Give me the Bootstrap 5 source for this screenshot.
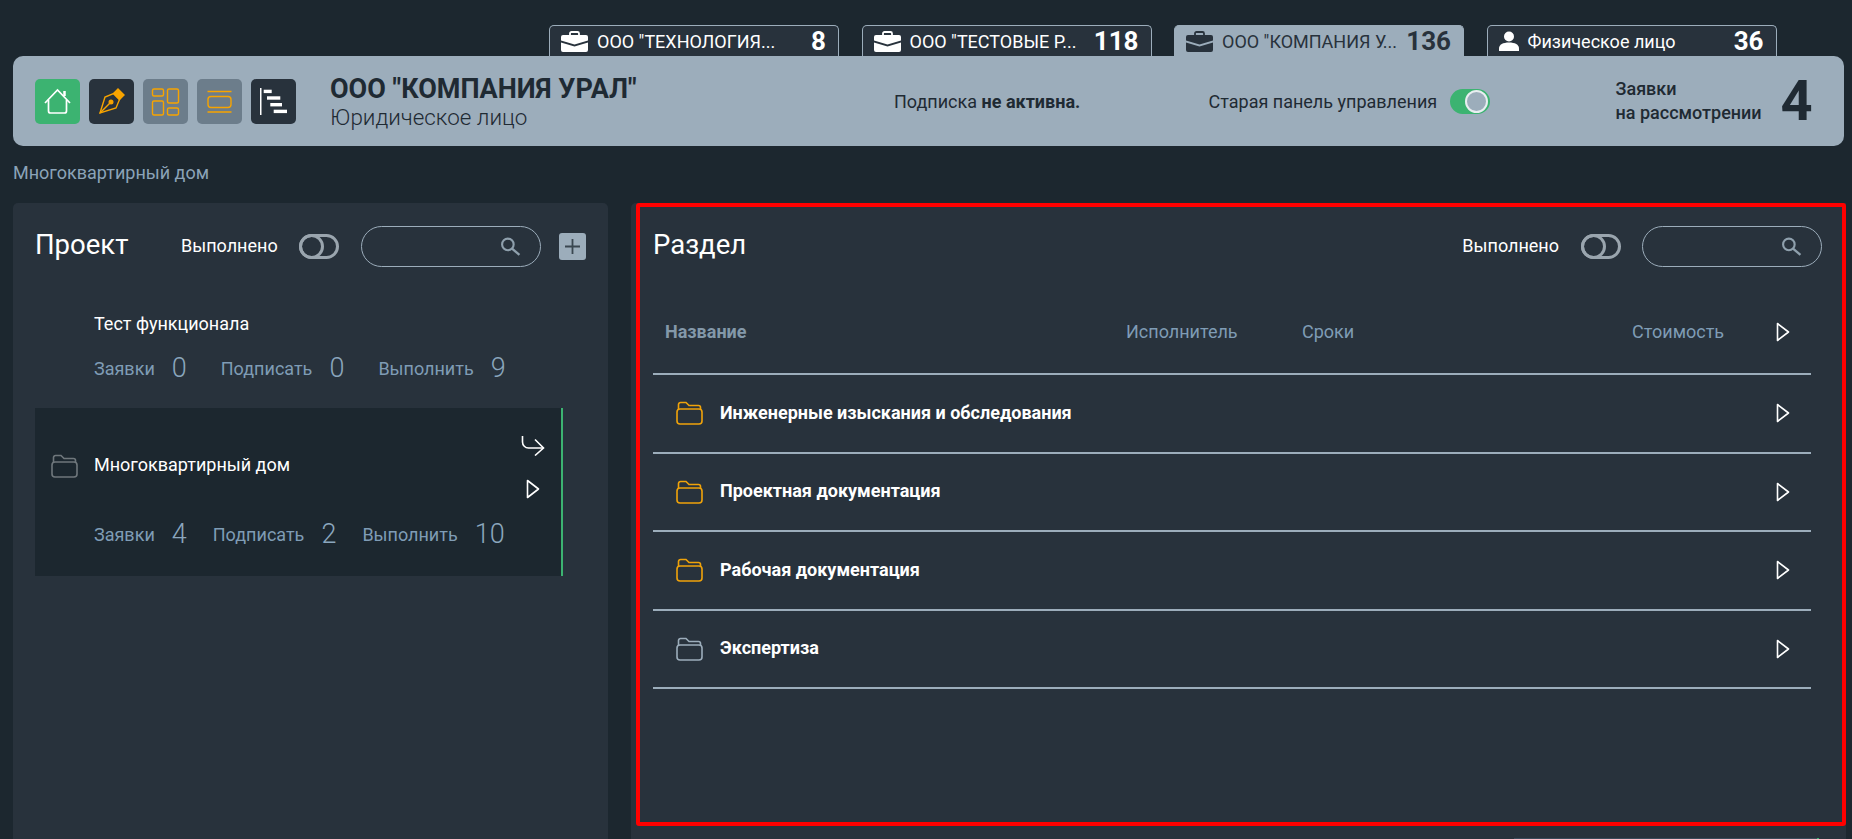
<!DOCTYPE html>
<html lang="ru">
<head>
<meta charset="utf-8">
<title>Панель управления</title>
<link href="https://cdn.jsdelivr.net/npm/bootstrap@5.3.0/dist/css/bootstrap.min.css" rel="stylesheet">
<style>
html,body{height:839px;overflow:hidden}
body{background:#1c272f;color:#fff;font-family:Roboto,"Liberation Sans",sans-serif;font-size:16px}
.tab-strip{height:56px;padding:25px 0 0 549px;gap:22.5px}
.co-tab{width:290px;height:31px;background:#28323c;border:1px solid #9cadbb;border-bottom:0;border-radius:5px 5px 0 0;padding:0 12px 0 11px;color:#fff}
.co-tab.is-on{background:#9cadbb;color:#28323c}
.co-tab svg{flex:none}
.co-name{flex:1 1 0;min-width:0;margin-left:9px;font-size:18px;white-space:nowrap}
.co-num{font-size:26px;font-weight:700;line-height:31px;margin-left:8px}
.top-bar{height:90px;margin:0 8px 0 13px;padding-left:22px;background:#9cadbb;border-radius:10px;color:#1f2a33}
.tool-row{gap:9px}
.tool-box{width:45px;height:45px;border-radius:5px;flex:none}
.tool-green{background:#3cb371}
.tool-dark{background:#28323c}
.tool-grey{background:#6c7d8b}
.org-block{width:564px;margin-left:34px;padding-top:2px}
.org-name{font-size:27px;font-weight:700;line-height:30px}
.org-kind{font-size:22.4px;font-weight:300;line-height:26px}
.sub-block{width:314.5px;font-size:18px}
.old-block{width:407px;font-size:18px}
.old-block .tgl{margin-left:13px}
.req-text{font-size:18px;font-weight:500;line-height:24px;width:165px}
.req-num{font-size:56px;font-weight:700;line-height:56px}
.crumb{height:57px;padding:14px 0 0 13px;color:#8ba3b8;font-size:18px;line-height:25px}
.work-area{height:636px;gap:23px;padding-left:13px}
.side-panel{width:595px;flex:none;background:#28323c;border-radius:5px 5px 0 0}
.sec-panel{width:1215px;flex:none;background:#28323c;border-radius:5px 0 0 0;padding-left:5px}
.sec-frame{width:1210px;height:623px;border:4px solid #f00;border-radius:3px;padding:19px 20px 0 13px}
.edge-sliver{height:1px;width:305px;margin:12px 27px 0 auto;background:#3b4a5a;border-right:2px solid #3cb371}
.head-line{height:41px}
.side-head{padding:23px 0 0 22px}
.pane-title{font-size:27.5px;line-height:32px;margin-bottom:4px}
.side-t{width:146px}
.done-label{font-size:18px;margin-bottom:2px}
.tgl{width:40px;height:25px;border:3px solid #9aa5ae;border-radius:13px;position:relative;flex:none}
.tgl::before{content:"";position:absolute;left:-3px;top:-3px;width:25px;height:25px;border:3px solid #9aa5ae;border-radius:50%}
.tgl.is-on{background:#3cb371;border-color:#3cb371}
.tgl.is-on::before{left:auto;background:#9cadbb;border-color:#e9eef1;border-width:2px;width:23px;height:23px;top:-2px;right:-1px}
.side-panel .tgl-gap{margin:0 22px 0 21px}
.sec-frame .tgl-gap{margin:0 21px 0 22px}
.find-box{width:180px;height:41px;border:1px solid #9cadbb;border-radius:21px;padding-right:19px;flex:none}
.lens-ico{color:#8fa0ad}
.plus-btn{width:27px;height:27px;background:#9cadbb;border-radius:3px;flex:none;margin-left:18px}
.tree-list{margin:0 45px 0 22px}
.tree-plain{padding:45px 0 0 59px}
.tree-active{margin-top:24px;height:168px;background:#1c272f;border-right:2px solid #3cb371;padding:28px 16px 0 16px}
.tree-title{font-size:18px;line-height:24px}
.tree-active .tree-title{margin-bottom:6px}
.tree-fold{color:#6f777c;flex:none;margin-bottom:4px}
.stat-line{color:#7f9cb5;font-size:18px;height:32px;margin-top:16px}
.tree-active .stat-line{margin:19px 0 0 43px}
.stat-line b{font-weight:300;font-size:27px;line-height:32px;margin-left:17px;color:#8ba6bd}
.stat-wide>span+span{margin-left:34px}
.stat-tight>span+span{margin-left:26px}
.stat-line>span{display:flex;align-items:center}
.act-col{width:24px;height:63px;flex:none}
.grid-line{display:grid;grid-template-columns:473px 176px 330px 144px 35px;align-items:center;border-bottom:2px solid #9cadbb;margin-right:11px;height:78.5px}
.grid-head{margin-top:27px;height:81px;color:#7f9cb5;font-size:18px;padding-bottom:4px}
.grid-head strong{font-weight:700;padding-left:12px;font-size:18px;color:#8398a9}
.row-name{grid-column:1 / span 4;padding-left:23px;padding-bottom:2px;font-weight:700;font-size:18px}
.row-name svg{margin:2px 17px 0 0;flex:none}
.fold-amber{color:#f0a30a}
.fold-grey{color:#9cadbb}
.box-content{box-sizing:content-box}
</style>
</head>
<body>
<svg width="0" height="0" class="position-absolute">
<defs>
<symbol id="case" viewBox="0 0 27 21"><path d="M9 5V2.500C9 1.700 9.700 1 10.500 1h6c.8 0 1.500.7 1.500 1.500V5" fill="none" stroke="currentColor" stroke-width="1.800"/><path d="M2 4h23a2 2 0 0 1 2 2v3.500l-13.500 4L0 9.500V6a2 2 0 0 1 2-2z" fill="currentColor"/><path d="M0 11.500l13.500 4 13.500-4V19a2 2 0 0 1-2 2H2a2 2 0 0 1-2-2z" fill="currentColor"/></symbol>
<symbol id="tri" viewBox="0 0 14 20"><path d="M1.500 1.500L12.500 10 1.500 18.500z" fill="none" stroke="#fff" stroke-width="1.600" stroke-linejoin="round"/></symbol>
<symbol id="fold" viewBox="0 0 27 24"><path d="M2.500 8V3.500a2 2 0 0 1 2-2H10l3 3h9.500a2 2 0 0 1 2 2V8" fill="none" stroke="currentColor" stroke-width="1.600"/><rect x="1" y="8" width="25" height="15" rx="3" fill="none" stroke="currentColor" stroke-width="1.600"/></symbol>
<symbol id="lens" viewBox="0 0 20 18"><circle cx="7.500" cy="7" r="5.500" fill="none" stroke="currentColor" stroke-width="2"/><path d="M11.500 11l7 6" stroke="currentColor" stroke-width="2.200" fill="none"/></symbol>
</defs>
</svg>

<div class="tab-strip d-flex">
  <div class="co-tab d-flex align-items-center"><svg width="27" height="21"><use href="#case"/></svg><span class="co-name">ООО "ТЕХНОЛОГИЯ...</span><span class="co-num">8</span></div>
  <div class="co-tab d-flex align-items-center"><svg width="27" height="21"><use href="#case"/></svg><span class="co-name">ООО "ТЕСТОВЫЕ Р...</span><span class="co-num">118</span></div>
  <div class="co-tab is-on d-flex align-items-center"><svg width="27" height="21"><use href="#case"/></svg><span class="co-name">ООО "КОМПАНИЯ У...</span><span class="co-num">136</span></div>
  <div class="co-tab d-flex align-items-center"><svg width="20" height="20" viewBox="0 0 20 20"><circle cx="10" cy="5.500" r="5" fill="currentColor"/><path d="M0 20v-2.500C0 13.500 4 11.500 10 11.500s10 2 10 6V20z" fill="currentColor"/></svg><span class="co-name">Физическое лицо</span><span class="co-num">36</span></div>
</div>

<header class="top-bar d-flex align-items-center">
  <div class="tool-row d-flex">
    <div class="tool-box tool-green"><svg width="45" height="45" viewBox="0 0 45 45" fill="none" stroke="#fff" stroke-width="1.700"><path d="M10 24L22.500 11 35 24"/><path d="M29.500 17v-5" stroke-width="2.500"/><path d="M13.500 21v11a2 2 0 0 0 2 2h14a2 2 0 0 0 2-2V21"/></svg></div>
    <div class="tool-box tool-dark"><svg width="45" height="45" viewBox="0 0 45 45" fill="none" stroke="#f7a400" stroke-width="1.400"><path d="M29 10l6 6-4.500 4.500-6-6z" fill="#f7a400"/><path d="M11 34l5-16 8.500-3.500 6 6L27 29z"/><path d="M11 34l9.500-9.500"/><circle cx="22" cy="23" r="1.800" fill="#f7a400"/></svg></div>
    <div class="tool-box tool-grey"><svg width="45" height="45" viewBox="0 0 45 45" fill="none" stroke="#f7a400" stroke-width="1.400"><rect x="9.500" y="10" width="11" height="7" rx="1.500"/><rect x="9.500" y="22" width="11" height="14" rx="1.500"/><rect x="24.500" y="10" width="11" height="14" rx="1.500"/><rect x="24.500" y="29" width="11" height="7" rx="1.500"/></svg></div>
    <div class="tool-box tool-grey"><svg width="45" height="45" viewBox="0 0 45 45" fill="none" stroke="#f7a400" stroke-width="1.400"><path d="M10.500 12.500h24M10.500 33h24"/><rect x="11" y="17.500" width="23" height="11" rx="3"/></svg></div>
    <div class="tool-box tool-dark"><svg width="45" height="45" viewBox="0 0 45 45" fill="#fff"><rect x="9" y="9" width="1.500" height="27"/><rect x="12.700" y="10.700" width="8" height="3.400"/><rect x="16" y="17.300" width="13.300" height="3.400"/><rect x="19.300" y="24" width="11.700" height="3.400"/><rect x="22.700" y="30.700" width="13.300" height="3.400"/></svg></div>
  </div>
  <div class="org-block">
    <div class="org-name">ООО "КОМПАНИЯ УРАЛ"</div>
    <div class="org-kind">Юридическое лицо</div>
  </div>
  <div class="sub-block">Подписка <strong>не активна.</strong></div>
  <div class="old-block d-flex align-items-center">Старая панель управления<span class="tgl is-on"></span></div>
  <div class="req-text">Заявки<br>на рассмотрении</div>
  <div class="req-num">4</div>
</header>

<div class="crumb">Многоквартирный дом</div>

<main class="work-area d-flex">
  <section class="side-panel">
    <div class="side-head head-line d-flex align-items-center box-content">
      <div class="pane-title side-t">Проект</div>
      <div class="done-label">Выполнено</div>
      <span class="tgl tgl-gap"></span>
      <div class="find-box d-flex align-items-center justify-content-end"><svg class="lens-ico" width="21" height="19"><use href="#lens"/></svg></div>
      <div class="plus-btn d-flex align-items-center justify-content-center"><svg width="17" height="17" viewBox="0 0 17 17"><path d="M8.500 1v15M1 8.500h15" stroke="#3a4751" stroke-width="1.800"/></svg></div>
    </div>
    <div class="tree-list">
      <div class="tree-plain">
        <div class="tree-title">Тест функционала</div>
        <div class="stat-line stat-wide d-flex align-items-center"><span>Заявки<b>0</b></span><span>Подписать<b>0</b></span><span>Выполнить<b>9</b></span></div>
      </div>
      <div class="tree-active">
        <div class="d-flex align-items-center">
          <svg width="27" height="24" class="tree-fold"><use href="#fold"/></svg>
          <div class="tree-title flex-grow-1 ms-3">Многоквартирный дом</div>
          <div class="act-col d-flex flex-column align-items-center justify-content-between">
            <svg width="24" height="20" viewBox="0 0 24 20" fill="none" stroke="#fff" stroke-width="1.600"><path d="M1.500 0v6a6 6 0 0 0 6 6H22"/><path d="M14 3.500l8.500 8.500-8.500 7.500"/></svg>
            <svg width="14" height="20"><use href="#tri"/></svg>
          </div>
        </div>
        <div class="stat-line stat-tight d-flex align-items-center"><span>Заявки<b>4</b></span><span>Подписать<b>2</b></span><span>Выполнить<b>10</b></span></div>
      </div>
    </div>
  </section>

  <section class="sec-panel">
    <div class="sec-frame">
      <div class="head-line d-flex align-items-center">
        <div class="pane-title flex-grow-1">Раздел</div>
        <div class="done-label">Выполнено</div>
        <span class="tgl tgl-gap"></span>
        <div class="find-box d-flex align-items-center justify-content-end"><svg class="lens-ico" width="21" height="19"><use href="#lens"/></svg></div>
      </div>
      <div class="grid-line grid-head">
        <strong>Название</strong><span>Исполнитель</span><span>Сроки</span><span>Стоимость</span>
        <svg width="14" height="20"><use href="#tri"/></svg>
      </div>
      <div class="grid-line"><div class="row-name d-flex align-items-center"><svg class="fold-amber" width="27" height="24"><use href="#fold"/></svg>Инженерные изыскания и обследования</div><svg width="14" height="20"><use href="#tri"/></svg></div>
      <div class="grid-line"><div class="row-name d-flex align-items-center"><svg class="fold-amber" width="27" height="24"><use href="#fold"/></svg>Проектная документация</div><svg width="14" height="20"><use href="#tri"/></svg></div>
      <div class="grid-line"><div class="row-name d-flex align-items-center"><svg class="fold-amber" width="27" height="24"><use href="#fold"/></svg>Рабочая документация</div><svg width="14" height="20"><use href="#tri"/></svg></div>
      <div class="grid-line"><div class="row-name d-flex align-items-center"><svg class="fold-grey" width="27" height="24"><use href="#fold"/></svg>Экспертиза</div><svg width="14" height="20"><use href="#tri"/></svg></div>
    </div>
    <div class="edge-sliver"></div>
  </section>
</main>
</body>
</html>
